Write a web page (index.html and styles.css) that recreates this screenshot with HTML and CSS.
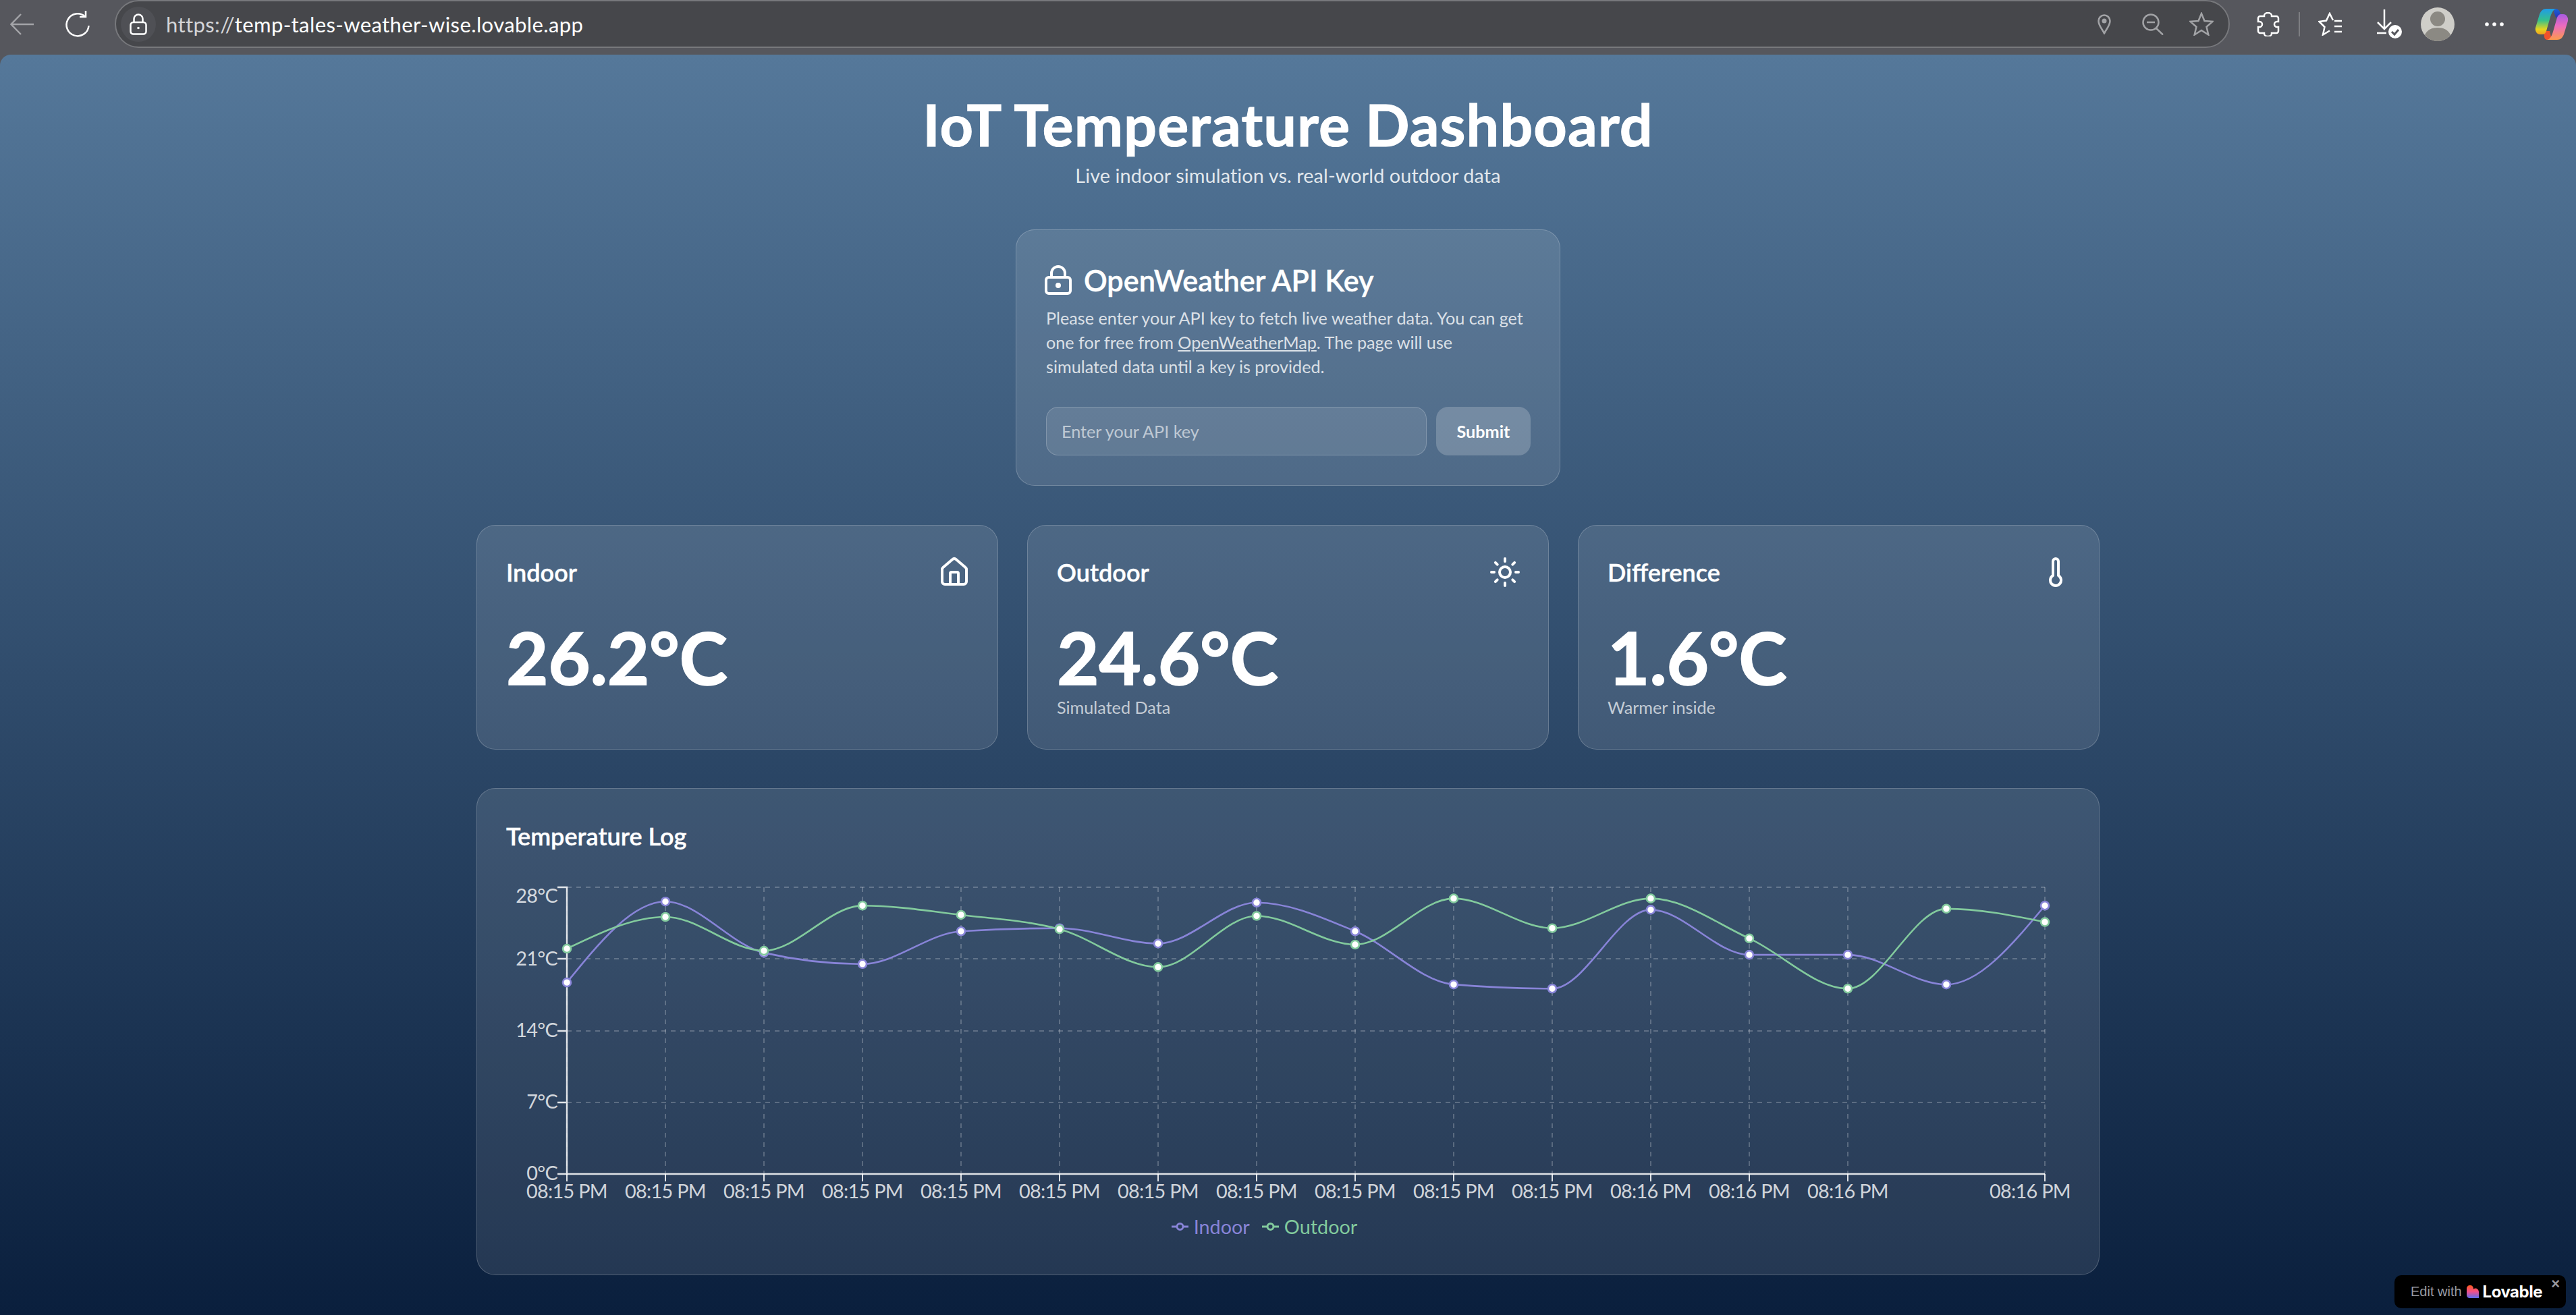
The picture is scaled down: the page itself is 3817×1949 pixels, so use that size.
FILE: index.html
```html
<!DOCTYPE html>
<html lang="en">
<head>
	<meta charset="UTF-8">
	<title>IoT Temperature Dashboard</title>
	<link rel="stylesheet" href="styles.css">
</head>
<body>
	<!-- browser toolbar -->
	<div class="toolbar">
		<svg class="tb-back" width="36" height="32" viewBox="0 0 36 32"><path d="M35 16H2M16 1 1.500 16 16 31"/></svg>
		<svg class="tb-reload" width="36" height="38" viewBox="0 0 36 38"><path d="M29 7.500A16.500 16.500 0 1 0 34.500 21"/><path d="M21 8h9V-1"/></svg>
		<div class="addr">
			<span class="addr-lock">
				<svg width="26" height="32" viewBox="0 0 26 32"><rect x="1.500" y="13" width="23" height="17.500" rx="4"/><path d="M6.500 13V8a6.500 6.500 0 0 1 13 0v5"/><circle class="fill" cx="13" cy="21.500" r="1.800"/></svg>
			</span>
			<span class="addr-url"><span class="addr-scheme">https://</span>temp-tales-weather-wise.lovable.app</span>
			<svg class="addr-pin" width="20" height="30" viewBox="0 0 20 30"><path d="M10 28.500C7 22 1.500 17 1.500 10a8.500 8.500 0 0 1 17 0C18.500 17 13 22 10 28.500z"/><circle class="fill" cx="10" cy="10" r="3.500"/></svg>
			<svg class="addr-zoom" width="32" height="32" viewBox="0 0 32 32"><circle cx="13" cy="13" r="11.500"/><path d="M7 13h12M21 22l10 9.500"/></svg>
			<svg class="addr-star" width="36" height="35" viewBox="0 0 36 35"><path d="M18 2l4.500 11 12 1-9 7.800 2.800 11.700L18 27l-10.300 6.500 2.800-11.700-9-7.800 12-1z"/></svg>
		</div>
		<svg class="tb-puzzle" width="34" height="36" viewBox="0 0 34 36"><path d="M11 6V5a5.500 4 0 0 1 11 0v1h7a3 3 0 0 1 3 3v5h-2a4 4 0 0 0 0 8h2v6a3 3 0 0 1-3 3h-7v1a5.500 4 0 0 1-11 0v-1H5a3 3 0 0 1-3-3v-6h2a4 4 0 0 0 0-8H2V9a3 3 0 0 1 3-3z"/></svg>
		<span class="tb-divider"></span>
		<svg class="tb-fav" width="36" height="35" viewBox="0 0 36 35"><path d="M22 12 17 2l-5 10.500L1.500 14l8 8L7 33.500l10-6M24 13h11M24 21h11M24 29h11"/></svg>
		<svg class="tb-down" width="38" height="50" viewBox="0 0 38 50"><path d="M11 0v29M1 19l10 10 10-10M0 35h14"/><circle class="fill-w" cx="27" cy="33" r="10"/><path class="check" d="M22 33l4 4 6-7"/></svg>
		<svg class="tb-avatar" width="50" height="50" viewBox="0 0 50 50"><circle cx="25" cy="25" r="25" fill="#cfcec9"/><circle cx="25" cy="17" r="11" fill="#8b8983"/><path d="M6 41c3-8 11-11 19-11s16 3 19 11c-5 6-12 9-19 9S11 47 6 41z" fill="#8b8983"/></svg>
		<svg class="tb-dots" width="28" height="6" viewBox="0 0 28 6"><circle cx="3" cy="3" r="2.800"/><circle cx="14" cy="3" r="2.800"/><circle cx="25" cy="3" r="2.800"/></svg>
		<svg class="tb-copilot" width="50" height="46" viewBox="0 0 50 46">
			<defs>
				<linearGradient id="cpLeft" x1="0" y1="0" x2="0" y2="1"><stop offset="0" stop-color="#1f9be8"/><stop offset=".45" stop-color="#35c08c"/><stop offset=".8" stop-color="#e6d41e"/><stop offset="1" stop-color="#f0a020"/></linearGradient>
				<linearGradient id="cpRight" x1="0" y1="0" x2="0" y2="1"><stop offset="0" stop-color="#a85be0"/><stop offset=".45" stop-color="#ec6bc0"/><stop offset="1" stop-color="#fb9a4c"/></linearGradient>
				<linearGradient id="cpTop" x1="0" y1="0" x2="0" y2="1"><stop offset="0" stop-color="#1762d8"/><stop offset="1" stop-color="#2836b8"/></linearGradient>
			</defs>
			<path d="M30 0c5 0 7 3 8 8l1 5h-8l-3-9z" fill="url(#cpTop)"/>
			<path d="M13 33h9l3 13h-6c-3 0-5-2-5-5z" fill="#f0522c"/>
			<path d="M17 0h15c-5 1-7 6-9 12l-6 21c-1 3-3 5-6 5H8c-5 0-8-5-7-10L7 8c2-5 5-8 10-8z" fill="url(#cpLeft)"/>
			<path d="M33 46H18c5-1 7-6 9-12l6-21c1-3 3-5 6-5h3c5 0 8 5 7 10l-6 20c-2 5-5 8-10 8z" fill="url(#cpRight)"/>
		</svg>
	</div>

	<div class="page">
		<div class="main">
			<h1 class="title">IoT Temperature Dashboard</h1>
			<p class="subtitle">Live indoor simulation vs. real-world outdoor data</p>

			<div class="card key-card">
				<h2 class="key-title">
					<svg class="icon" width="48" height="48" viewBox="0 0 24 24"><circle cx="12" cy="16" r="1"/><rect x="3" y="10" width="18" height="12" rx="2"/><path d="M7 10V7a5 5 0 0 1 10 0v3"/></svg>
					OpenWeather API Key
				</h2>
				<p class="key-text">Please enter your API key to fetch live weather data. You can get<br>one for free from <a href="#">OpenWeatherMap</a>. The page will use<br>simulated data until a key is provided.</p>
				<div class="key-form">
					<input class="key-input" type="text" placeholder="Enter your API key">
					<button class="key-btn">Submit</button>
				</div>
			</div>

			<div class="stats">
				<div class="card stat">
					<div class="stat-head">
						<span class="stat-name">Indoor</span>
						<svg class="icon" width="48" height="48" viewBox="0 0 24 24"><path d="M15 21v-8a1 1 0 0 0-1-1h-4a1 1 0 0 0-1 1v8"/><path d="M3 10a2 2 0 0 1 .709-1.528l7-5.999a2 2 0 0 1 2.582 0l7 5.999A2 2 0 0 1 21 10v9a2 2 0 0 1-2 2H5a2 2 0 0 1-2-2z"/></svg>
					</div>
					<div class="stat-value">26.2°C</div>
				</div>
				<div class="card stat">
					<div class="stat-head">
						<span class="stat-name">Outdoor</span>
						<svg class="icon" width="48" height="48" viewBox="0 0 24 24"><circle cx="12" cy="12" r="4"/><path d="M12 2v2M12 20v2M4.930 4.930l1.410 1.410M17.660 17.660l1.410 1.410M2 12h2M20 12h2M6.340 17.660l-1.410 1.410M19.070 4.930l-1.410 1.410"/></svg>
					</div>
					<div class="stat-value">24.6°C</div>
					<div class="stat-note">Simulated Data</div>
				</div>
				<div class="card stat">
					<div class="stat-head">
						<span class="stat-name">Difference</span>
						<svg class="icon" width="48" height="48" viewBox="0 0 24 24"><path d="M14 4v10.540a4 4 0 1 1-4 0V4a2 2 0 0 1 4 0Z"/></svg>
					</div>
					<div class="stat-value">1.6°C</div>
					<div class="stat-note">Warmer inside</div>
				</div>
			</div>

			<div class="card log">
				<h3 class="log-title">Temperature Log</h3>
				<svg id="chart" class="chart" width="2317" height="500">
					<g id="grid"></g>
					<path class="axis" d="M76 25H90V450H2280M76 131h14M76 238h14M76 344h14M76 450h14"/>
					<g id="ticks"></g>
					<text class="ylabel" x="76" y="48">28°C</text>
					<text class="ylabel" x="76" y="141">21°C</text>
					<text class="ylabel" x="76" y="247">14°C</text>
					<text class="ylabel" x="76" y="353">7°C</text>
					<text class="ylabel" x="76" y="459">0°C</text>
					<text class="xlabel" x="90" y="486">08:15 PM</text>
					<text class="xlabel" x="236" y="486">08:15 PM</text>
					<text class="xlabel" x="382" y="486">08:15 PM</text>
					<text class="xlabel" x="528" y="486">08:15 PM</text>
					<text class="xlabel" x="674" y="486">08:15 PM</text>
					<text class="xlabel" x="820" y="486">08:15 PM</text>
					<text class="xlabel" x="966" y="486">08:15 PM</text>
					<text class="xlabel" x="1112" y="486">08:15 PM</text>
					<text class="xlabel" x="1258" y="486">08:15 PM</text>
					<text class="xlabel" x="1404" y="486">08:15 PM</text>
					<text class="xlabel" x="1550" y="486">08:15 PM</text>
					<text class="xlabel" x="1696" y="486">08:16 PM</text>
					<text class="xlabel" x="1842" y="486">08:16 PM</text>
					<text class="xlabel" x="1988" y="486">08:16 PM</text>
					<text class="xlabel" x="2258" y="486">08:16 PM</text>
					<g id="lines"></g>
				</svg>
				<div class="legend">
					<span class="legend-item indoor">
						<svg width="25" height="14" viewBox="0 0 25 14"><path d="M0 7h7.500M17.500 7H25"/><circle cx="12.500" cy="7" r="4.500"/></svg>
						Indoor
					</span>
					<span class="legend-item outdoor">
						<svg width="25" height="14" viewBox="0 0 25 14"><path d="M0 7h7.500M17.500 7H25"/><circle cx="12.500" cy="7" r="4.500"/></svg>
						Outdoor
					</span>
				</div>
			</div>
		</div>

		<div class="badge">
			<span class="badge-edit">Edit with</span>
			<svg class="badge-logo" width="18" height="19" viewBox="0 0 18 19">
				<defs><linearGradient id="heart" x1="0" y1="0" x2="0" y2="1"><stop offset="0" stop-color="#ff5a1f"/><stop offset=".5" stop-color="#f0508a"/><stop offset="1" stop-color="#5a6cf0"/></linearGradient></defs>
				<path d="M5 0c3 0 5 2 5 5v.500C11 4.700 12 4.500 13 4.500c3 0 5 2.500 5 5.500v9H5c-3 0-5-2-5-5V5c0-3 2-5 5-5z" fill="url(#heart)"/>
			</svg>
			<span class="badge-name">Lovable</span>
			<span class="badge-close">×</span>
		</div>
	</div>

	<script src="chart.js"></script>
</body>
</html>
```

FILE: styles.css
```css
* { box-sizing: border-box; margin: 0; padding: 0; }
html, body { height: 100%; overflow: hidden; }
body {
	background: #56575d;
	color: #fff;
	font-family: Lato, "Noto Sans", sans-serif;
}

/* browser toolbar */
.toolbar {
	display: flex;
	align-items: center;
	height: 81px;
	padding: 0 0 10px 15px;
}
.toolbar svg { flex: none; fill: none; stroke: #fff; stroke-width: 2.5; }
.toolbar .fill { fill: currentColor; stroke: none; }
.tb-back { stroke: #a3a4a8 !important; }
.tb-reload { margin-left: 46px; overflow: visible; }
.addr {
	flex: none;
	display: flex;
	align-items: center;
	width: 3134px;
	height: 71px;
	margin-left: 37px;
	padding: 0 22px 0 7px;
	background: #46474b;
	border: 2.5px solid #77787c;
	border-radius: 36px;
}
.addr-lock {
	display: flex;
	align-items: center;
	justify-content: center;
	width: 52px;
	height: 52px;
	border-radius: 50%;
	background: #4f5055;
	color: #fff;
}
.addr-url {
	flex: 1;
	margin-left: 15px;
	font-size: 31px;
	letter-spacing: .4px;
	color: #fff;
}
.addr-scheme { color: #d4d5d8; }
.addr svg.addr-pin, .addr svg.addr-zoom, .addr svg.addr-star { stroke: #a2a3a6; color: #a2a3a6; }
.addr-zoom { margin-left: 46px; }
.addr-star { margin-left: 38px; }
.tb-puzzle { margin-left: 40px; }
.tb-divider { width: 2px; height: 36px; margin-left: 28px; background: #7d7e82; }
.tb-fav { margin-left: 27px; }
.tb-down { margin-left: 51px; margin-top: 6px; }
.toolbar .fill-w { fill: #fff; stroke: none; }
.toolbar .check { stroke: #56575d; stroke-width: 3; }
.toolbar svg.tb-avatar { margin-left: 27px; stroke: none; }
.toolbar svg.tb-dots { margin-left: 45px; fill: #fff; stroke: none; }
.toolbar svg.tb-copilot { margin-left: 46px; stroke: none; }

/* page */
.page {
	position: relative;
	height: 1868px;
	padding-top: 55px;
	background: linear-gradient(180deg, #55789a 0%, #0a1f3d 100%);
	border-radius: 16px 16px 0 0;
}
.main {
	display: flex;
	flex-direction: column;
	align-items: center;
	width: 2405px;
	margin: 0 auto;
}
.title {
	font-size: 86.4px;
	line-height: 96px;
	font-weight: 700;
	letter-spacing: 1px;
	-webkit-text-stroke: 1px #fff;
}
.subtitle {
	margin-top: 8px;
	font-size: 28.8px;
	line-height: 40px;
	letter-spacing: .1px;
	color: rgba(255, 255, 255, .85);
}
.card {
	background: rgba(255, 255, 255, .1);
	border: 1.5px solid rgba(255, 255, 255, .2);
	border-radius: 28px;
}
.icon { flex: none; fill: none; stroke: #fff; stroke-width: 2; stroke-linecap: round; stroke-linejoin: round; }

/* api key */
.key-card {
	width: 807px;
	margin-top: 60px;
	padding: 44px;
}
.key-title {
	display: flex;
	align-items: center;
	gap: 14px;
	margin-left: -6px;
	padding-top: 4px;
	font-size: 43.2px;
	line-height: 52px;
	font-weight: 600;
	-webkit-text-stroke: .4px #fff;
}
.key-text {
	margin-top: 12px;
	font-size: 25.2px;
	line-height: 36px;
	color: rgba(255, 255, 255, .8);
}
.key-text a { color: inherit; }
.key-form {
	display: flex;
	gap: 14px;
	margin-top: 42px;
	margin-right: -1px;
}
.key-input {
	flex: 1;
	min-width: 0;
	height: 72px;
	padding: 0 22px;
	background: rgba(255, 255, 255, .1);
	border: 1.5px solid rgba(255, 255, 255, .2);
	border-radius: 18px;
	color: #fff;
	font: 25.2px Lato, sans-serif;
}
.key-input::placeholder { color: rgba(255, 255, 255, .6); }
.key-btn {
	width: 140px;
	height: 72px;
	background: rgba(255, 255, 255, .2);
	border: 0;
	border-radius: 18px;
	color: #fff;
	font: 700 25.2px Lato, sans-serif;
}

/* stat cards */
.stats {
	display: grid;
	grid-template-columns: repeat(3, 1fr);
	gap: 43px;
	width: 100%;
	margin-top: 58px;
}
.stat { padding: 43px; min-height: 333px; }
.stat-head {
	display: flex;
	align-items: center;
	justify-content: space-between;
	margin-top: 2px;
	margin-right: -3px;
	height: 48px;
}
.stat-name { font-size: 36px; font-weight: 600; -webkit-text-stroke: .4px #fff; }
.stat-value {
	margin-top: 47px;
	font-size: 108px;
	line-height: 108px;
	font-weight: 700;
	letter-spacing: -.4px;
	-webkit-text-stroke: 1.5px #fff;
}
.stat-note {
	margin-top: 3px;
	font-size: 25.2px;
	line-height: 36px;
	color: rgba(255, 255, 255, .7);
}

/* log */
.log {
	width: 100%;
	margin-top: 57px;
	padding: 43px 43px 0;
	height: 722px;
}
.log-title {
	font-size: 36px;
	line-height: 50px;
	font-weight: 600;
	padding-top: 2px;
	-webkit-text-stroke: .4px #fff;
}
.chart { display: block; margin-top: 26px; overflow: visible; }
.axis { fill: none; stroke: rgba(255, 255, 255, .85); stroke-width: 2.4; }
.grid-line { stroke: rgba(255, 255, 255, .22); stroke-width: 2; stroke-dasharray: 7 7; }
.tick { stroke: rgba(255, 255, 255, .85); stroke-width: 2; }
.ylabel, .xlabel { font-size: 28.8px; letter-spacing: -.7px; fill: rgba(255, 255, 255, .8); }
.ylabel { text-anchor: end; }
.xlabel { text-anchor: middle; }
.line { fill: none; stroke-width: 2.6; }
.dot { fill: #fff; stroke-width: 2.6; }
.legend {
	display: flex;
	justify-content: center;
	gap: 18px;
	padding: 8px 70px 0 0;
	font-size: 28.8px;
	line-height: 40px;
}
.legend-item { display: inline-flex; align-items: center; gap: 8px; }
.legend-item svg { fill: none; stroke: currentColor; stroke-width: 3; }
.indoor { color: #8884d8; }
.outdoor { color: #82ca9d; }

/* badge in the corner */
.badge {
	position: absolute;
	right: 15px;
	bottom: 10px;
	display: flex;
	align-items: center;
	width: 254px;
	height: 49px;
	padding-left: 24px;
	background: #000;
	border-radius: 10px;
}
.badge-edit { font: 20px "Liberation Sans", Arial, sans-serif; color: #9a9aa0; }
.badge-logo { margin-left: 7px; }
.badge-name { margin-left: 6px; font: 700 24px Inter, sans-serif; letter-spacing: -.5px; }
.badge-close {
	position: absolute;
	top: 2px;
	right: 9px;
	font: 700 22px/22px "Liberation Sans", sans-serif;
	color: #9a9aa0;
}
```

FILE: chart.js
```js
window.onload = function() {
	var NS = 'http://www.w3.org/2000/svg';
	var indoor = [18.7,26.6,21.6,20.5,23.7,24.0,22.5,26.5,23.7,18.5,18.1,25.8,21.4,21.4,18.5,26.2];
	var outdoor = [22.0,25.1,21.8,26.2,25.3,23.9,20.2,25.2,22.4,26.9,24.0,26.9,23.0,18.1,25.9,24.6];
	var left = 90, step = 146, base = 450, perDeg = 15.18;

	function add(parent, tag, attrs) {
		var el = document.createElementNS(NS, tag);
		for (var k in attrs) el.setAttribute(k, attrs[k]);
		parent.appendChild(el);
		return el;
	}
	function xAt(i) { return left + i * step; }
	function yAt(v) { return base - v * perDeg; }

	var grid = document.getElementById('grid');
	var ticks = document.getElementById('ticks');
	[25, 131, 238, 344].forEach(function(y) {
		add(grid, 'line', {'class': 'grid-line', x1: left, x2: xAt(15), y1: y, y2: y});
	});
	for (var i = 0; i < 16; i++) {
		// the 15th label is dropped for lack of room, so it gets no tick or grid line
		if (i == 14) continue;
		add(grid, 'line', {'class': 'grid-line', x1: xAt(i), x2: xAt(i), y1: 25, y2: base});
		add(ticks, 'line', {'class': 'tick', x1: xAt(i), x2: xAt(i), y1: base, y2: base + 11});
	}

	// same curve as d3 curveMonotoneX
	function curve(vals) {
		var ys = vals.map(yAt), t = [], n = ys.length;
		for (var i = 1; i < n - 1; i++) {
			var s0 = (ys[i] - ys[i - 1]) / step, s1 = (ys[i + 1] - ys[i]) / step;
			var sign = (s0 < 0 ? -1 : 1) + (s1 < 0 ? -1 : 1);
			t[i] = sign * Math.min(Math.abs(s0), Math.abs(s1), Math.abs(s0 + s1) / 4) || 0;
		}
		t[0] = (3 * (ys[1] - ys[0]) / step - t[1]) / 2;
		t[n - 1] = (3 * (ys[n - 1] - ys[n - 2]) / step - t[n - 2]) / 2;
		var d = 'M' + xAt(0) + ' ' + ys[0], h = step / 3;
		for (i = 1; i < n; i++) {
			d += 'C' + (xAt(i - 1) + h) + ' ' + (ys[i - 1] + h * t[i - 1]) + ' ' +
				(xAt(i) - h) + ' ' + (ys[i] - h * t[i]) + ' ' + xAt(i) + ' ' + ys[i];
		}
		return d;
	}

	var lines = document.getElementById('lines');
	function draw(vals, color) {
		add(lines, 'path', {'class': 'line', d: curve(vals), stroke: color});
		vals.forEach(function(v, i) {
			add(lines, 'circle', {'class': 'dot', cx: xAt(i), cy: yAt(v), r: 6, stroke: color});
		});
	}
	draw(indoor, '#8884d8');
	draw(outdoor, '#82ca9d');
};
```
